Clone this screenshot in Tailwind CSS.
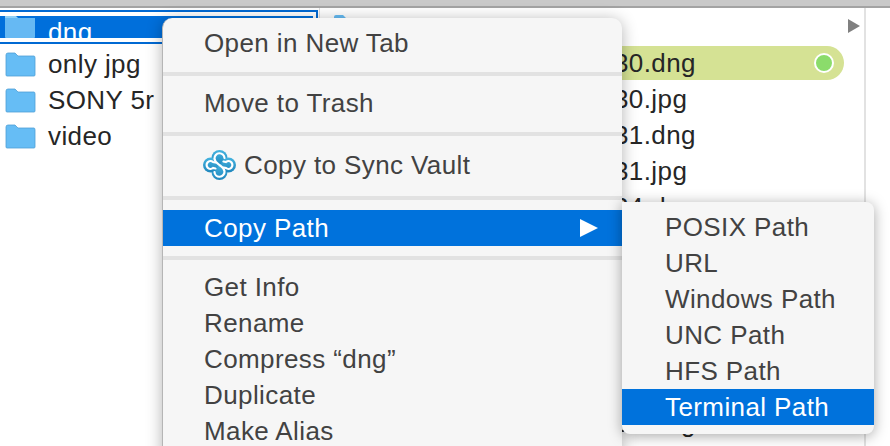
<!DOCTYPE html>
<html>
<head>
<meta charset="utf-8">
<script src="https://cdn.jsdelivr.net/npm/@tailwindcss/browser@4"></script>
</head>
<body class="w-[890px] h-[446px] overflow-hidden bg-white font-['Liberation_Sans',sans-serif] text-[26px] tracking-[0.4px] text-[#262626]">
<div class="relative w-[890px] h-[446px] overflow-hidden">
    <!-- window top edge -->
    <div class="h-[8px] bg-[#c9c9c9] border-b-2 border-[#a3a3a3]"></div>

    <div class="flex h-[438px]">
        <!-- first column -->
        <div id="colFolders" class="w-[320px] pt-[2px] border-r border-[#dcdcdc]">
            <div class="-ml-[2px] w-[320px] h-[34px] border-2 border-[#0069d3] pt-[4px] pb-[4px] pr-[3px]">
                <div class="h-[22px] bg-[#006fdb] flex items-start overflow-hidden pl-[5px] gap-[12px] text-white">
                    <svg width="31" height="22" viewBox="0 0 31 22" class="shrink-0">
                        <path d="M0 2 H30 V21 Q30 22 29 22 H1 Q0 22 0 21 Z" fill="#66b9f3"/>
                        <path d="M0 0 H11 L13 2 H0 Z" fill="#8fd0f7"/>
                    </svg>
                    <span class="-mt-[2px] leading-[36px]">dng</span>
                </div>
            </div>
            <div class="pt-[2px]">
                <div class="h-[36px] flex items-center pl-[5px] gap-[12px]">
                    <svg width="31" height="25" viewBox="0 0 31 25" class="shrink-0"><path d="M1 3 Q1 1 3 1 H10 L13 4 H29 Q30 4 30 6 V23 Q30 24 29 24 H2 Q1 24 1 23 Z" fill="#66bdf5" stroke="#4e9fd6" stroke-width="0.8"/></svg>
                    <span>only jpg</span>
                </div>
                <div class="h-[36px] flex items-center pl-[5px] gap-[12px]">
                    <svg width="31" height="25" viewBox="0 0 31 25" class="shrink-0"><path d="M1 3 Q1 1 3 1 H10 L13 4 H29 Q30 4 30 6 V23 Q30 24 29 24 H2 Q1 24 1 23 Z" fill="#66bdf5" stroke="#4e9fd6" stroke-width="0.8"/></svg>
                    <span>SONY 5r</span>
                </div>
                <div class="h-[36px] flex items-center pl-[5px] gap-[12px]">
                    <svg width="31" height="25" viewBox="0 0 31 25" class="shrink-0"><path d="M1 3 Q1 1 3 1 H10 L13 4 H29 Q30 4 30 6 V23 Q30 24 29 24 H2 Q1 24 1 23 Z" fill="#66bdf5" stroke="#4e9fd6" stroke-width="0.8"/></svg>
                    <span>video</span>
                </div>
            </div>
        </div>

        <!-- second column -->
        <div id="colFiles" class="w-[546px] border-r-2 border-[#e2e2e2] pt-[6px]">
            <div class="h-[32px] flex items-start pl-[13px]">
                <svg width="31" height="25" viewBox="0 0 31 25"><path d="M1 3 Q1 1 3 1 H10 L13 4 H29 Q30 4 30 6 V23 Q30 24 29 24 H2 Q1 24 1 23 Z" fill="#66bdf5"/></svg>
                <svg width="12" height="14" viewBox="0 0 12 14" class="ml-auto mr-[4px] mt-[5px]"><path d="M0 0 L12 7 L0 14 Z" fill="#808080"/></svg>
            </div>
            <div class="ml-[180px] w-[344px] h-[34px] rounded-r-[17px] bg-[#d5e294] flex items-center pl-[114px]">
                <span>30.dng</span>
                <span class="ml-auto mr-[10px] w-[20px] h-[20px] rounded-full border-2 border-white bg-[#8bdc6b]"></span>
            </div>
            <div class="ml-[180px] pl-[114px]">
                <div class="h-[36px] leading-[38px]">30.jpg</div>
                <div class="h-[36px] leading-[38px]">31.dng</div>
                <div class="h-[36px] leading-[38px]">31.jpg</div>
                <div class="h-[36px] leading-[38px]">34.dng</div>
                <div class="h-[180px]"></div>
                <div class="h-[36px] leading-[38px]">38.dng</div>
            </div>
        </div>
    </div>

    <!-- context menu -->
    <div id="contextMenu" class="absolute left-[162px] top-[18px] w-[460px] h-[440px] bg-[#f6f6f6] rounded-t-[10px] border-l border-[#b5b5b5] shadow-[0_2px_16px_rgba(0,0,0,0.3)] pt-[7px] text-[#424242]">
        <div class="h-[36px] flex items-center pl-[41px]">Open in New Tab</div>
        <div class="h-[4px] mt-[11px] mb-[9px] bg-[#e2e2e2]"></div>
        <div class="h-[36px] flex items-center pl-[41px]">Move to Trash</div>
        <div class="h-[4px] mt-[11px] mb-[11px] bg-[#e2e2e2]"></div>
        <div class="h-[36px] flex items-center pl-[40px] gap-[8px]">
            <svg width="33" height="30" viewBox="0 0 33 30">
                <defs><linearGradient id="syncBlue" x1="0" y1="0" x2="0" y2="1"><stop offset="0" stop-color="#45b4e0"/><stop offset="1" stop-color="#1f86bd"/></linearGradient></defs>
                <g fill="url(#syncBlue)">
                    <circle cx="16.5" cy="8" r="8"/><circle cx="16.5" cy="22" r="8"/><circle cx="7.5" cy="15" r="7.5"/><circle cx="25.5" cy="15" r="7.5"/>
                </g>
                <g fill="none" stroke="#fff" stroke-width="2.2" stroke-linecap="round">
                    <path d="M21.5 8 A5 5 0 0 0 11.5 8.5 C11.5 12 14.5 13 16.5 15 C18.5 17 21.5 18 21.5 21.5 A5 5 0 0 1 11.5 22"/>
                    <path d="M12.5 18.5 L10 18 A3.9 3.9 0 1 1 10 12 L12.5 12.5"/>
                    <path d="M20.5 11.5 L23 12 A3.9 3.9 0 1 1 23 18 L20.5 17.5"/>
                </g>
            </svg>
            <span>Copy to Sync Vault</span>
        </div>
        <div class="h-[4px] mt-[13px] mb-[10px] bg-[#e2e2e2]"></div>
        <div class="h-[36px] flex items-center pl-[41px] bg-[#0072dc] text-white relative">
            Copy Path
            <svg width="18" height="18" viewBox="0 0 18 18" class="absolute right-[24px] top-[9px]"><path d="M0 0 L18 9 L0 18 Z" fill="#fff"/></svg>
        </div>
        <div class="h-[4px] mt-[10px] mb-[9px] bg-[#e2e2e2]"></div>
        <div class="h-[36px] flex items-center pl-[41px]">Get Info</div>
        <div class="h-[36px] flex items-center pl-[41px]">Rename</div>
        <div class="h-[36px] flex items-center pl-[41px]">Compress “dng”</div>
        <div class="h-[36px] flex items-center pl-[41px]">Duplicate</div>
        <div class="h-[36px] flex items-center pl-[41px]">Make Alias</div>
    </div>

    <!-- submenu -->
    <div id="subMenu" class="absolute left-[622px] top-[202px] w-[252px] h-[232px] bg-[#f6f6f6] rounded-r-[8px] rounded-bl-[8px] overflow-hidden shadow-[0_2px_14px_rgba(0,0,0,0.35)] pt-[7px] text-[#424242]">
        <div class="h-[36px] flex items-center pl-[43px]">POSIX Path</div>
        <div class="h-[36px] flex items-center pl-[43px]">URL</div>
        <div class="h-[36px] flex items-center pl-[43px]">Windows Path</div>
        <div class="h-[36px] flex items-center pl-[43px]">UNC Path</div>
        <div class="h-[36px] flex items-center pl-[43px]">HFS Path</div>
        <div class="h-[36px] flex items-center pl-[43px] bg-[#0072dc] text-white">Terminal Path</div>
    </div>
</div>
</body>
</html>
